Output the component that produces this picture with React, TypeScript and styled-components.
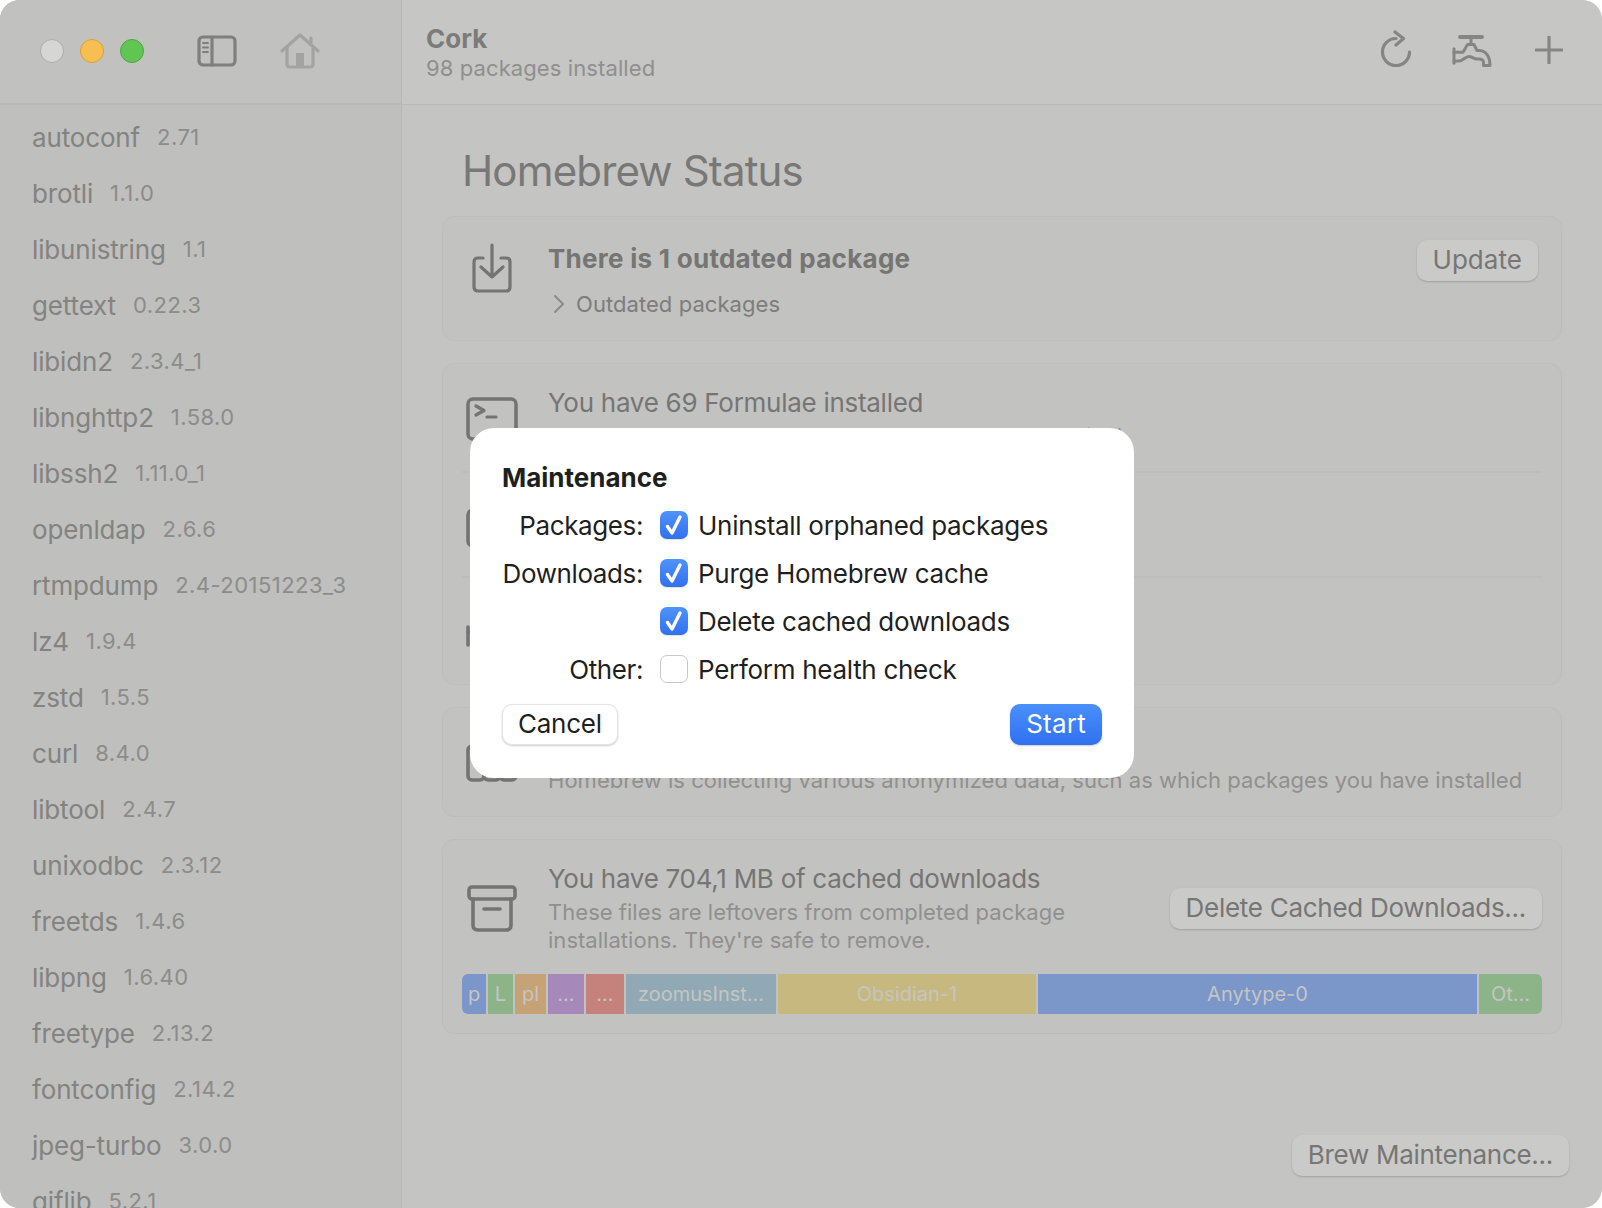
import React from "react";
import styled, { createGlobalStyle } from "styled-components";

const Global = createGlobalStyle`
  html, body { margin: 0; padding: 0; background: #ffffff; }
  body {
    font-family: Inter, "Liberation Sans", sans-serif;
    -webkit-font-smoothing: antialiased;
  }
  * { box-sizing: border-box; }
`;

const Window = styled.div`
  position: relative;
  width: 1602px;
  height: 1208px;
  display: grid;
  grid-template-columns: 402px 1fr;
  border-radius: 20px;
  overflow: hidden;
  background: #c4c4c2;
`;

const Sidebar = styled.aside`
  display: flex;
  flex-direction: column;
  min-height: 0;
  overflow: hidden;
  background: #bfbfbd;
  border-right: 1px solid #b8b8b6;
`;

const SideBar = styled.div`
  flex: none;
  height: 105px;
  display: flex;
  align-items: center;
  padding: 0 0 1px 40px;
  background: #c1c1bf;
  border-bottom: 2px solid #b8b8b6;
`;

const Lights = styled.div`
  display: flex;
  gap: 16px;
`;

const Light = styled.span<{ $fill: string; $edge: string }>`
  width: 24px;
  height: 24px;
  border-radius: 50%;
  background: ${(p) => p.$fill};
  border: 1px solid ${(p) => p.$edge};
`;

const SideTools = styled.div`
  display: flex;
  align-items: center;
  gap: 43px;
  margin-left: 53px;
`;

const List = styled.ul`
  list-style: none;
  margin: 0;
  padding: 4px 0 0 32px;
`;

const Item = styled.li`
  height: 56px;
  display: flex;
  align-items: center;
  gap: 17px;
  white-space: nowrap;
`;

const Name = styled.span`
  font-size: 26px;
  letter-spacing: -0.15px;
  color: #838381;
`;

const Version = styled.span`
  font-size: 22px;
  letter-spacing: 0.45px;
  color: #8c8c8a;
`;

const Main = styled.main`
  display: flex;
  flex-direction: column;
  min-height: 0;
`;

const Toolbar = styled.header`
  flex: none;
  height: 105px;
  display: flex;
  align-items: center;
  justify-content: space-between;
  padding: 2px 40px 0 24px;
  background: #c6c6c5;
  border-bottom: 1px solid #b9b9b7;
`;

const AppTitle = styled.div`
  display: flex;
  flex-direction: column;
`;

const AppName = styled.div`
  font-size: 26px;
  line-height: 30px;
  font-weight: 700;
  color: #7b7b7a;
`;

const AppSub = styled.div`
  font-size: 22px;
  line-height: 28px;
  letter-spacing: 0.1px;
  color: #8f8f8e;
`;

const Tools = styled.div`
  display: flex;
  align-items: center;
  gap: 38px;
  margin-top: -6px;
  & > svg:last-child {
    margin-left: 5px;
  }
`;

const Content = styled.div`
  flex: 1;
  min-height: 0;
  display: flex;
  flex-direction: column;
  padding: 40px 34px 32px 40px;
`;

const Heading = styled.h1`
  margin: 0 0 19px 20px;
  font-size: 42px;
  line-height: 52px;
  font-weight: 400;
  letter-spacing: -0.85px;
  color: #787877;
`;

const Cards = styled.div`
  display: flex;
  flex-direction: column;
  gap: 22px;
  padding-right: 7px;
`;

const Card = styled.section`
  border: 1px solid #bdbdbb;
  border-radius: 12px;
  background: #c2c2c0;
  padding: 0 19px;
`;

const Row = styled.div<{ $bottom?: number; $align?: string; $right?: number }>`
  display: flex;
  align-items: ${(p) => p.$align ?? "center"};
  padding: 23px ${(p) => p.$right ?? 0}px ${(p) => p.$bottom ?? 23}px 0;
  & + & {
    border-top: 2px solid #bdbdbb;
  }
`;

const IconSlot = styled.div<{ $top?: number }>`
  flex: none;
  width: 60px;
  margin-right: 26px;
  margin-top: ${(p) => p.$top ?? 0}px;
  display: flex;
  justify-content: center;
`;

const Body = styled.div`
  flex: 1;
  min-width: 0;
`;

const Title = styled.div`
  font-size: 26px;
  line-height: 32px;
  letter-spacing: -0.28px;
  color: #757574;
`;

const BoldTitle = styled.div`
  margin-top: 3px;
  font-size: 26px;
  line-height: 32px;
  letter-spacing: 0.27px;
  font-weight: 700;
  color: #757574;
`;

const Sub = styled.div`
  margin-top: 3px;
  font-size: 22px;
  line-height: 28px;
  letter-spacing: 0.03px;
  color: #90908f;
  white-space: pre-line;
`;

const Disclosure = styled.div`
  display: flex;
  align-items: center;
  gap: 11px;
  margin-top: 15px;
  height: 28px;
  padding-left: 5px;
  font-size: 22px;
  letter-spacing: 0.06px;
  color: #7d7d7c;
`;

const GhostButton = styled.button<{ $tight?: boolean }>`
  flex: none;
  height: 41px;
  padding: 0 16px 3px;
  border: 0;
  border-radius: 10px;
  background: #cacac9;
  box-shadow: 0 1px 2px rgba(0, 0, 0, 0.18);
  font: 400 26px Inter, sans-serif;
  letter-spacing: ${(p) => (p.$tight ? "-0.28px" : "0.05px")};
  color: #767675;
`;

const SizeBar = styled.div`
  display: flex;
  gap: 2px;
  height: 40px;
  margin-top: 20px;
  margin-bottom: 19px;
  border-radius: 6px;
  overflow: hidden;
`;

const Segment = styled.div<{ $w: number; $c: string }>`
  flex: none;
  width: ${(p) => p.$w}px;
  background: ${(p) => p.$c};
  display: flex;
  align-items: center;
  justify-content: center;
  overflow: hidden;
  white-space: nowrap;
  font-size: 20px;
  color: #c5c5c3;
`;

const Footer = styled.div`
  margin-top: auto;
  display: flex;
  justify-content: flex-end;
`;

const Dialog = styled.div`
  position: absolute;
  left: 470px;
  top: 428px;
  width: 664px;
  height: 350px;
  padding: 33px 32px 0;
  border-radius: 24px;
  background: #ffffff;
  color: #1f1f1f;
`;

const DialogTitle = styled.div`
  font-size: 26px;
  line-height: 34px;
  font-weight: 700;
  letter-spacing: 0;
  margin-bottom: 6px;
`;

const Options = styled.div`
  display: grid;
  grid-template-columns: 141px 1fr;
  column-gap: 17px;
  grid-auto-rows: 48px;
  align-items: center;
`;

const OptionLabel = styled.div`
  font-size: 26px;
  letter-spacing: -0.4px;
  text-align: right;
  white-space: nowrap;
`;

const Option = styled.div`
  display: flex;
  align-items: center;
  gap: 10px;
  font-size: 26px;
  letter-spacing: -0.29px;
  white-space: nowrap;
`;

const Check = styled.span<{ $on: boolean }>`
  flex: none;
  width: 28px;
  height: 28px;
  display: flex;
  align-items: center;
  justify-content: center;
  border-radius: 7px;
  background: ${(p) => (p.$on ? "linear-gradient(#4f93fb, #3170f0)" : "#ffffff")};
  border: ${(p) => (p.$on ? "0" : "1px solid #c9c9c9")};
  box-shadow: ${(p) => (p.$on ? "0 1px 1px rgba(0,0,0,.12)" : "none")};
`;

const Actions = styled.div`
  display: flex;
  justify-content: space-between;
  margin-top: 11px;
`;

const DialogButton = styled.button<{ $primary?: boolean }>`
  height: 41px;
  padding: 0 ${(p) => (p.$primary ? 16 : 15)}px 2px;
  border: ${(p) => (p.$primary ? "0" : "1px solid #e4e4e4")};
  border-radius: 10px;
  background: ${(p) => (p.$primary ? "linear-gradient(#4a90fb, #2f70f2)" : "#ffffff")};
  box-shadow: 0 1px 2px rgba(0, 0, 0, 0.2);
  font: 400 26px Inter, sans-serif;
  letter-spacing: ${(p) => (p.$primary ? "0.25px" : "-0.25px")};
  color: ${(p) => (p.$primary ? "#ffffff" : "#1f1f1f")};
`;

const Stroke = styled.svg<{ $c?: string; $w?: number }>`
  display: block;
  flex: none;
  fill: none;
  stroke: ${(p) => p.$c ?? "#7a7a79"};
  stroke-width: ${(p) => p.$w ?? 3.2};
  stroke-linecap: round;
  stroke-linejoin: round;
`;

const packages: [string, string][] = [
  ["autoconf", "2.71"], ["brotli", "1.1.0"], ["libunistring", "1.1"], ["gettext", "0.22.3"],
  ["libidn2", "2.3.4_1"], ["libnghttp2", "1.58.0"], ["libssh2", "1.11.0_1"], ["openldap", "2.6.6"],
  ["rtmpdump", "2.4-20151223_3"], ["lz4", "1.9.4"], ["zstd", "1.5.5"], ["curl", "8.4.0"],
  ["libtool", "2.4.7"], ["unixodbc", "2.3.12"], ["freetds", "1.4.6"], ["libpng", "1.6.40"],
  ["freetype", "2.13.2"], ["fontconfig", "2.14.2"], ["jpeg-turbo", "3.0.0"], ["giflib", "5.2.1"],
];

const segments: [number, string, string][] = [
  [24, "#7b96c9", "p"], [25, "#8cb488", "L"], [31, "#c5a377", "pl"], [36, "#a788bb", "..."],
  [38, "#c5827c", "..."], [150, "#90a9b4", "zoomusInst..."], [258, "#c7b87f", "Obsidian-1"],
  [439, "#7b96c9", "Anytype-0"], [63, "#8cb488", "Ot..."],
];

const options: [string, string, boolean][] = [
  ["Packages:", "Uninstall orphaned packages", true],
  ["Downloads:", "Purge Homebrew cache", true],
  ["", "Delete cached downloads", true],
  ["Other:", "Perform health check", false],
];

const SidebarIcon = () => (
  <Stroke width="40" height="32" viewBox="0 0 40 32" $c="#7f7f7e">
    <rect x="2" y="2" width="36" height="28" rx="4" />
    <path d="M15 2V30" />
    <path d="M6 8H11M6 12.5H11M6 17H11" strokeWidth="2" />
  </Stroke>
);

const HomeIcon = () => (
  <Stroke width="40" height="36" viewBox="0 0 40 36" $c="#a3a3a2">
    <path d="M2 18L20 2L38 18" />
    <path d="M31 5V11" />
    <path d="M7 15V31Q7 34 10 34H30Q33 34 33 31V15" />
    <rect x="16" y="20" width="8" height="14" fill="#a3a3a2" stroke="none" />
  </Stroke>
);

const ReloadIcon = () => (
  <Stroke width="36" height="40" viewBox="0 0 36 40" $c="#858584">
    <path d="M18 8.500A13.500 13.500 0 1 0 31.500 22" />
    <path d="M17 2L25.500 8.500L18 15" />
  </Stroke>
);

const FaucetIcon = () => (
  <Stroke width="40" height="36" viewBox="0 -1.500 40 36" $c="#858584" $w={3}>
    <path d="M8 3.500H30" strokeWidth="3.8" />
    <path d="M19 4V11" />
    <path d="M2 15.300V29.700" />
    <path d="M2 18.700H11L15.500 11H22L25 17H27C34 17 38 23 38 32H31.500V29C31.500 26.500 29 25 26 25.500C22 26 20 23 17 23C13 23 11 27.500 7 27.500H2" />
  </Stroke>
);

const PlusIcon = () => (
  <Stroke width="28" height="28" viewBox="0 0 28 28" $c="#858584">
    <path d="M14 1V27M1 14H27" />
  </Stroke>
);

const DownloadIcon = () => (
  <Stroke width="40" height="50" viewBox="0 0 40 50" $c="#747473">
    <path d="M11 15H6Q2 15 2 19V44Q2 48 6 48H34Q38 48 38 44V19Q38 15 34 15H29" />
    <path d="M20 2V34M9 24L20 34L31 24" />
  </Stroke>
);

const TerminalIcon = () => (
  <Stroke width="52" height="44" viewBox="0 0 52 44" $c="#747473">
    <rect x="2" y="2" width="48" height="40" rx="5" strokeWidth="3.6" />
    <path d="M10 9L18 13.500L10 18" />
    <path d="M21 20H30" />
  </Stroke>
);

const CaskIcon = () => (
  <Stroke width="52" height="40" viewBox="0 0 52 40" $c="#747473">
    <rect x="2" y="2" width="48" height="36" rx="5" strokeWidth="3.6" />
    <path d="M12 20H40" />
  </Stroke>
);

const TapIcon = () => (
  <Stroke width="52" height="30" viewBox="0 0 52 30" $c="#747473">
    <path d="M2 9V27" strokeWidth="3.6" />
    <path d="M2 14H40M40 8V22" />
  </Stroke>
);

const AnalyticsIcon = () => (
  <Stroke width="52" height="38" viewBox="0 0 52 38" $c="#747473">
    <rect x="2" y="2" width="16" height="34" rx="4" strokeWidth="3.6" />
    <rect x="18" y="10" width="16" height="26" rx="4" strokeWidth="3.6" />
    <rect x="34" y="18" width="16" height="18" rx="4" strokeWidth="3.6" />
  </Stroke>
);

const ArchiveIcon = () => (
  <Stroke width="50" height="47" viewBox="0 0 50 47" $c="#747473">
    <rect x="2" y="2" width="46" height="12" rx="3" strokeWidth="3.6" />
    <path d="M6 14V40Q6 45 11 45H39Q44 45 44 40V14" strokeWidth="3.6" />
    <path d="M17 24H33" strokeWidth="3.6" />
  </Stroke>
);

const ChevronIcon = () => (
  <Stroke width="12" height="20" viewBox="0 0 12 20" $c="#8b8b8a" $w={2}>
    <path d="M2 2L10 10L2 18" />
  </Stroke>
);

const TickIcon = () => (
  <Stroke width="20" height="22" viewBox="0 0 20 22" $c="#ffffff" $w={3.4}>
    <path d="M3.500 12.500L8 19L16 3" />
  </Stroke>
);

export default function App() {
  return (
    <>
      <Global />
      <Window>
        <Sidebar>
          <SideBar>
            <Lights>
              <Light $fill="#d6d6d4" $edge="#adadab" />
              <Light $fill="#f6bf50" $edge="#d9a13c" />
              <Light $fill="#61c554" $edge="#4fa640" />
            </Lights>
            <SideTools>
              <SidebarIcon />
              <HomeIcon />
            </SideTools>
          </SideBar>
          <List>
            {packages.map(([name, version]) => (
              <Item key={name}>
                <Name>{name}</Name>
                <Version>{version}</Version>
              </Item>
            ))}
          </List>
        </Sidebar>
        <Main>
          <Toolbar>
            <AppTitle>
              <AppName>Cork</AppName>
              <AppSub>98 packages installed</AppSub>
            </AppTitle>
            <Tools>
              <ReloadIcon />
              <FaucetIcon />
              <PlusIcon />
            </Tools>
          </Toolbar>
          <Content>
            <Heading>Homebrew Status</Heading>
            <Cards>
              <Card>
                <Row $align="flex-start" $bottom={22} $right={4}>
                  <IconSlot $top={3}>
                    <DownloadIcon />
                  </IconSlot>
                  <Body>
                    <BoldTitle>There is 1 outdated package</BoldTitle>
                    <Disclosure>
                      <ChevronIcon />
                      Outdated packages
                    </Disclosure>
                  </Body>
                  <GhostButton>Update</GhostButton>
                </Row>
              </Card>
              <Card>
                <Row $bottom={21}>
                  <IconSlot><TerminalIcon /></IconSlot>
                  <Body>
                    <Title>You have 69 Formulae installed</Title>
                    <Sub>Formulae are packages that you use through a terminal</Sub>
                  </Body>
                </Row>
                <Row $bottom={17}>
                  <IconSlot><CaskIcon /></IconSlot>
                  <Body>
                    <Title>You have 29 Casks installed</Title>
                    <Sub>Casks are packages that have graphical windows</Sub>
                  </Body>
                </Row>
                <Row $bottom={20}>
                  <IconSlot><TapIcon /></IconSlot>
                  <Body>
                    <Title>You have 3 Taps added</Title>
                    <Sub>Taps are sources of packages</Sub>
                  </Body>
                </Row>
              </Card>
              <Card>
                <Row $bottom={22}>
                  <IconSlot><AnalyticsIcon /></IconSlot>
                  <Body>
                    <Title>Homebrew analytics are enabled</Title>
                    <Sub>Homebrew is collecting various anonymized data, such as which packages you have installed</Sub>
                  </Body>
                </Row>
              </Card>
              <Card>
                <Row $bottom={0}>
                  <IconSlot><ArchiveIcon /></IconSlot>
                  <Body>
                    <Title>You have 704,1 MB of cached downloads</Title>
                    <Sub>{"These files are leftovers from completed package\ninstallations. They're safe to remove."}</Sub>
                  </Body>
                  <GhostButton $tight>Delete Cached Downloads...</GhostButton>
                </Row>
                <SizeBar>
                  {segments.map(([w, c, label], i) => (
                    <Segment key={i} $w={w} $c={c}>{label}</Segment>
                  ))}
                </SizeBar>
              </Card>
            </Cards>
            <Footer>
              <GhostButton $tight>Brew Maintenance...</GhostButton>
            </Footer>
          </Content>
        </Main>
        <Dialog>
          <DialogTitle>Maintenance</DialogTitle>
          <Options>
            {options.map(([label, text, on]) => (
              <React.Fragment key={text}>
                <OptionLabel>{label}</OptionLabel>
                <Option>
                  <Check $on={on}>{on && <TickIcon />}</Check>
                  {text}
                </Option>
              </React.Fragment>
            ))}
          </Options>
          <Actions>
            <DialogButton>Cancel</DialogButton>
            <DialogButton $primary>Start</DialogButton>
          </Actions>
        </Dialog>
      </Window>
    </>
  );
}
